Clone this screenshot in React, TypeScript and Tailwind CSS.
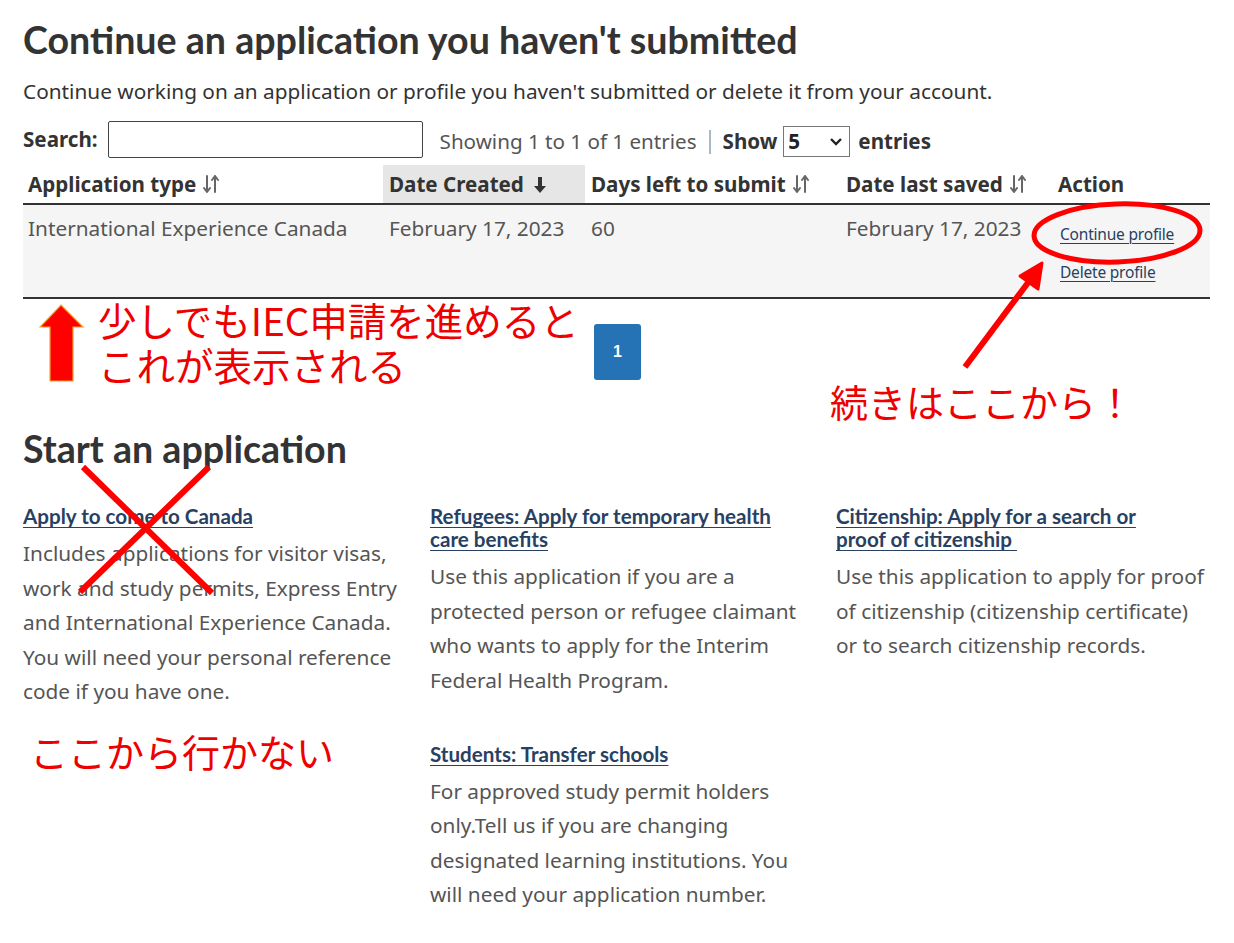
import React from 'react'

const body = "font-['Noto_Sans',sans-serif]"
const head = "font-['Lato','Noto_Sans',sans-serif]"
const jp = "font-['Noto_Sans_CJK_JP',sans-serif]"

function SortBoth() {
  return (
    <svg width="18" height="20" viewBox="0 0 18 20" className="ml-[6px] inline-block align-[-2px]">
      <g stroke="#666" strokeWidth="2" fill="none" strokeLinecap="round" strokeLinejoin="round">
        <path d="M5 2v16M2 14l3 4 3-4" />
        <path d="M13 18V2M10 6l3-4 3 4" />
      </g>
    </svg>
  )
}

function SortDown() {
  return (
    <svg width="16" height="18" viewBox="0 0 16 18" className="ml-[8px] inline-block align-[-2px]">
      <path d="M6 1h4v9h4l-6 7-6-7h4z" fill="#333" />
    </svg>
  )
}

function UpArrow() {
  return (
    <svg width="46" height="80" viewBox="0 0 46 80" className="shrink-0">
      <path d="M22 2 L44 24 L34 24 L34 78 L11 78 L11 24 L1 24 Z" fill="#ff0000" stroke="#f7a22c" strokeWidth="1.2" />
    </svg>
  )
}

function Overlay() {
  return (
    <svg
      width="1234"
      height="943"
      viewBox="0 0 1234 943"
      className="pointer-events-none absolute left-0 top-0"
    >
      <ellipse cx="1117" cy="233" rx="83" ry="29" fill="none" stroke="#ff0000" strokeWidth="5" transform="rotate(-2 1117 233)" />
      <line x1="965" y1="367" x2="1030" y2="280" stroke="#ff0000" strokeWidth="6" />
      <path d="M1042 263 L1020 276 L1038 289 Z" fill="#ff0000" stroke="#ff0000" strokeWidth="3" strokeLinejoin="round" />
      <line x1="83" y1="467" x2="212" y2="593" stroke="#ff0000" strokeWidth="6" />
      <line x1="209" y1="467" x2="80" y2="592" stroke="#ff0000" strokeWidth="6" />
    </svg>
  )
}

const apps = [
  {
    title: 'Apply to come to Canada',
    text: 'Includes applications for visitor visas, work and study permits, Express Entry and International Experience Canada. You will need your personal reference code if you have one.',
    w: 'w-[385px]',
  },
  {
    title: 'Refugees: Apply for temporary health\ncare benefits',
    text: 'Use this application if you are a protected person or refugee claimant who wants to apply for the Interim Federal Health Program.',
    w: 'w-[385px]',
  },
  {
    title: 'Citizenship: Apply for a search or\nproof of citizenship ',
    text: 'Use this application to apply for proof of citizenship (citizenship certificate) or to search citizenship records.',
    w: 'w-[372px]',
  },
]

function AppItem({ title, text, w }: { title: string; text: string; w: string }) {
  return (
    <div className={w}>
      <a href="#" className={`${head} block whitespace-pre-wrap text-[20.6px] font-bold leading-[23px] text-[#284162] underline decoration-1 underline-offset-[3px]`}>
        {title}
      </a>
      <p className={`${body} mt-[8px] text-[20.8px] leading-[34.5px] text-[#555]`}>{text}</p>
    </div>
  )
}

export default function App() {
  return (
    <div className="relative h-[943px] w-[1234px] overflow-hidden bg-white">
      <div className="pl-[23px] pt-[18px]">
        <h1 className={`${head} text-[37.6px] font-bold leading-[44px] text-[#333]`}>
          Continue an application you haven't submitted
        </h1>
        <p className={`${body} mt-[15px] text-[20.8px] leading-[28px] text-[#333]`}>
          Continue working on an application or profile you haven't submitted or delete it from your account.
        </p>

        <div className={`${body} mt-[16px] flex h-[37px] items-center text-[20.6px]`}>
          <span className="font-bold text-[#333]">Search:</span>
          <div className="ml-[10px] h-[37px] w-[315px] shrink-0 rounded-[2px] border border-[#444]" />
          <span className="ml-[17px] mt-[4px] text-[#555]">Showing 1 to 1 of 1 entries</span>
          <span className="ml-[12px] mt-[4px] h-[24px] border-l-2 border-[#a7bacd]" />
          <span className="ml-[12px] mt-[4px] font-bold text-[#333]">Show</span>
          <div className="ml-[6px] mt-[4px] flex h-[31px] w-[67px] shrink-0 items-center justify-between border border-[#777] px-[4px] text-[#222]">
            <span className="font-bold">5</span>
            <svg width="14" height="10" viewBox="0 0 14 10" className="mr-[2px]">
              <path d="M2 2l5 5 5-5" stroke="#222" strokeWidth="2.4" fill="none" />
            </svg>
          </div>
          <span className="ml-[8px] mt-[4px] font-bold text-[#333]">entries</span>
        </div>

        <table className={`${body} mt-[7px] w-[1187px] table-fixed border-collapse text-[20.6px]`}>
          <colgroup>
            <col className="w-[360px]" />
            <col className="w-[202px]" />
            <col className="w-[255px]" />
            <col className="w-[212px]" />
            <col className="w-[158px]" />
          </colgroup>
          <thead>
            <tr className="h-[39px] border-b-2 border-[#333] text-left text-[#333]">
              <th className="whitespace-nowrap px-[5px] font-bold">Application type<SortBoth /></th>
              <th className="whitespace-nowrap bg-[#e6e6e6] px-[6px] font-bold">Date Created<SortDown /></th>
              <th className="whitespace-nowrap px-[6px] font-bold">Days left to submit<SortBoth /></th>
              <th className="whitespace-nowrap px-[6px] font-bold">Date last saved<SortBoth /></th>
              <th className="whitespace-nowrap px-[6px] font-bold">Action</th>
            </tr>
          </thead>
          <tbody>
            <tr className="h-[94px] border-b-2 border-[#333] bg-[#f5f5f5] align-top text-[20.8px] leading-[28px] text-[#555]">
              <td className="whitespace-nowrap px-[5px] pt-[9px]">International Experience Canada</td>
              <td className="whitespace-nowrap px-[6px] pt-[9px]">February 17, 2023</td>
              <td className="px-[6px] pt-[9px]">60</td>
              <td className="whitespace-nowrap px-[6px] pt-[9px]">February 17, 2023</td>
              <td className="pl-[8px] pt-[18px]">
                <a href="#" className="block whitespace-nowrap text-[15.5px] leading-[22px] tracking-[-0.2px] text-[#284162] underline decoration-1 underline-offset-[3px]">
                  Continue profile
                </a>
                <a href="#" className="mt-[16px] block whitespace-nowrap text-[15.5px] leading-[22px] tracking-[-0.2px] text-[#284162] underline decoration-1 underline-offset-[3px]">
                  Delete profile
                </a>
              </td>
            </tr>
          </tbody>
        </table>

        <div className="flex h-[90px] items-start">
          <div className="ml-[16px] mt-[4px]">
            <UpArrow />
          </div>
          <div className={`${jp} -mt-[2px] ml-[13px] w-[496px] shrink-0 whitespace-nowrap text-[38.5px] leading-[45px] text-[#ee0000]`}>
            <p>少しでもIEC申請を進めると</p>
            <p>これが表示される</p>
          </div>
          <button className="mt-[25px] h-[56px] w-[47px] shrink-0 rounded-[3px] bg-[#2572b4] font-['Liberation_Sans',sans-serif] text-[16px] font-bold text-white">
            1
          </button>
        </div>

        <h2 className={`${head} mt-[38px] text-[37.6px] font-bold leading-[44px] text-[#333]`}>
          Start an application
        </h2>

        <div className="mt-[34px] grid grid-cols-[407px_406px_385px] gap-y-[34px]">
          {apps.map((a) => (
            <AppItem key={a.title} title={a.title} text={a.text} w={a.w} />
          ))}
          <p className={`${jp} whitespace-nowrap pl-[7px] text-[38px] leading-[15px] text-[#ee0000]`}>ここから行かない</p>
          <AppItem
            title="Students: Transfer schools"
            text="For approved study permit holders only.Tell us if you are changing designated learning institutions. You will need your application number."
            w="w-[385px]"
          />
        </div>
      </div>

      <p className={`${jp} absolute left-[830px] top-[378px] whitespace-nowrap text-[38px] leading-[45px] text-[#ee0000]`}>
        続きはここから！
      </p>
      <Overlay />
    </div>
  )
}
